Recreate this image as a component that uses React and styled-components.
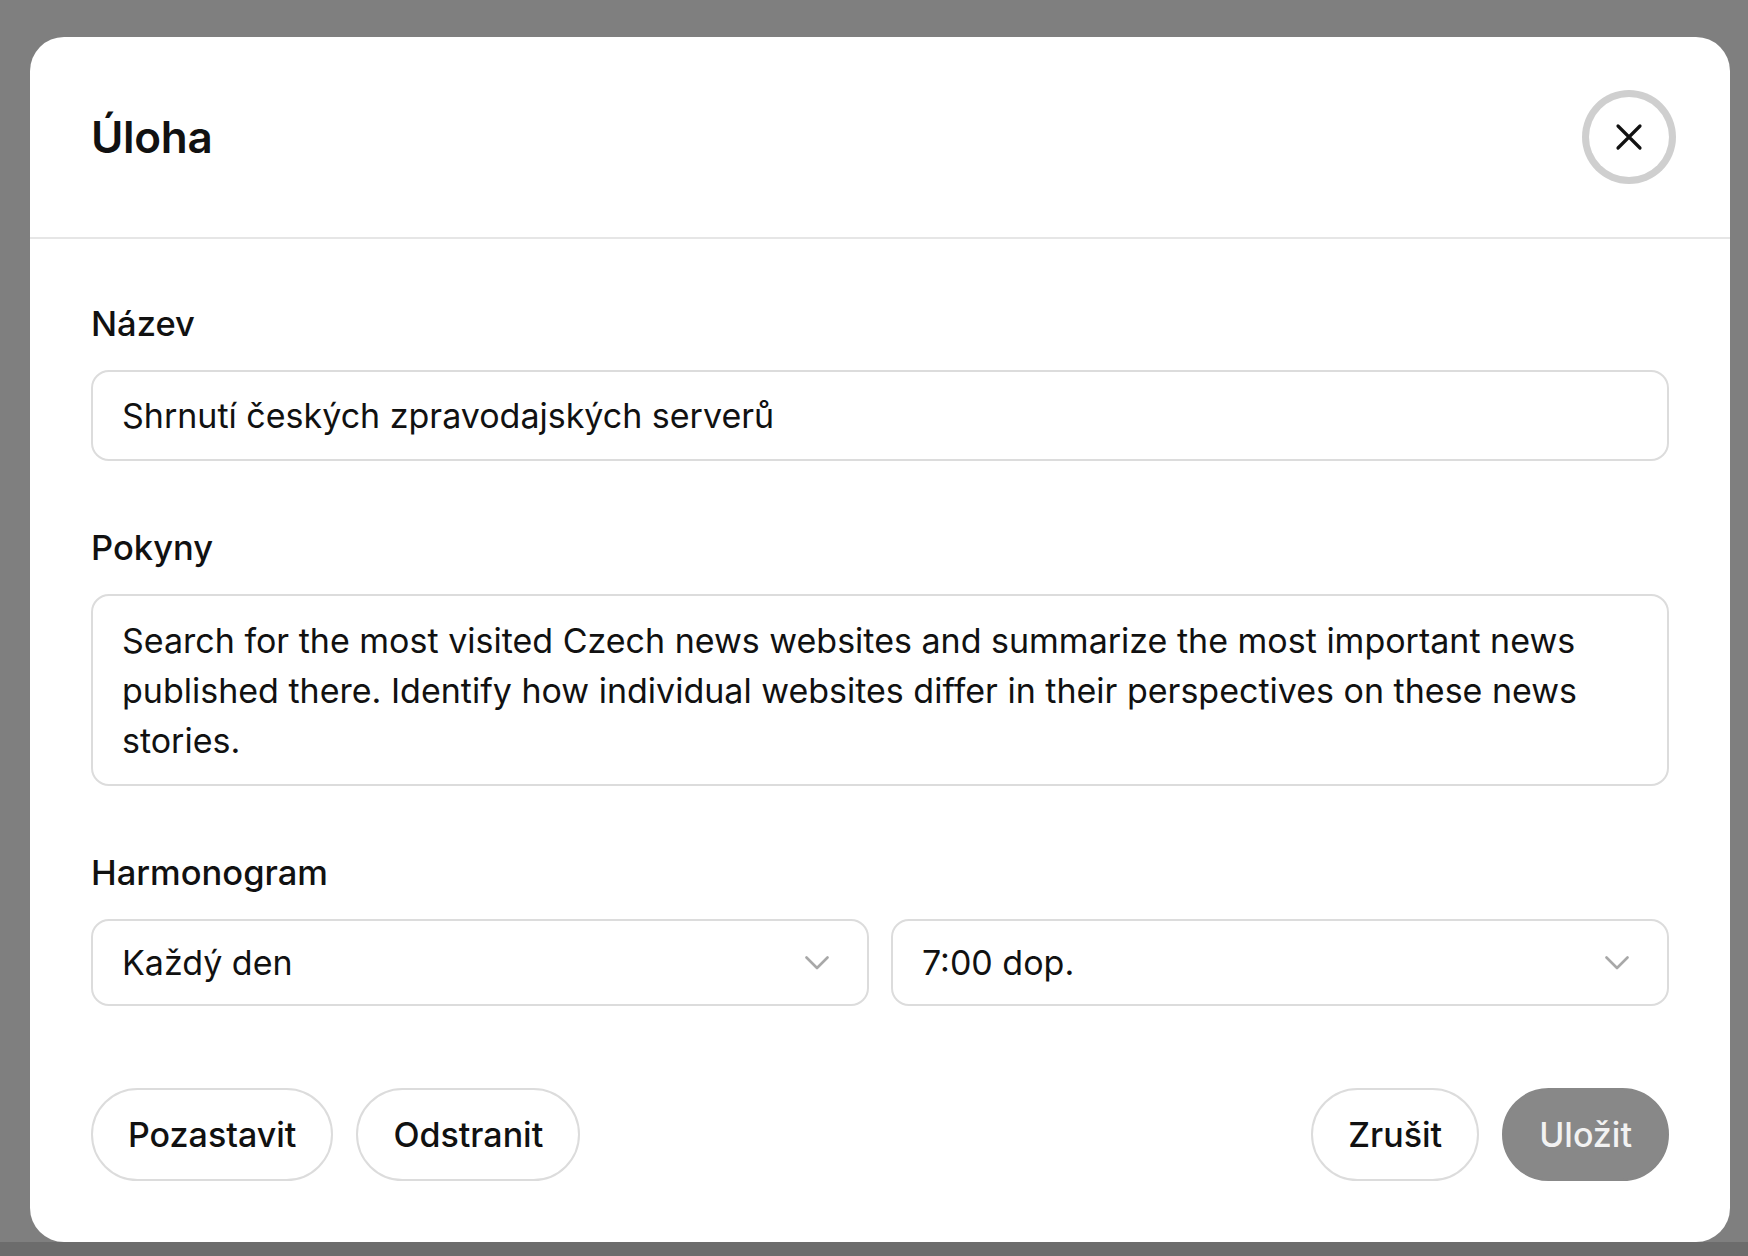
import React, { useState } from "react";
import styled, { createGlobalStyle } from "styled-components";

const GlobalStyle = createGlobalStyle`
  html, body {
    margin: 0;
    padding: 0;
    background: #7f7f7f;
    font-family: Inter, "Noto Sans", "Liberation Sans", sans-serif;
    color: #111111;
  }
  * {
    box-sizing: border-box;
  }
`;

const Backdrop = styled.div`
  min-height: 1256px;
  display: flex;
  align-items: flex-start;
  padding: 37px 18px 0 30px;
  background: linear-gradient(to bottom, #7f7f7f 0, #7f7f7f 1242px, #6c6c6c 1242px);
`;

const Modal = styled.div`
  width: 1700px;
  background: #ffffff;
  border-radius: 34px;
  overflow: hidden;
`;

const Header = styled.div`
  height: 202px;
  display: flex;
  align-items: center;
  justify-content: space-between;
  padding: 0 61px 0 61px;
  border-bottom: 2px solid #e6e6e6;
`;

const Title = styled.h2`
  margin: 0;
  font-size: 44px;
  font-weight: 600;
  letter-spacing: -0.3px;
`;

const CloseButton = styled.button`
  width: 80px;
  height: 80px;
  border-radius: 50%;
  border: none;
  background: #ffffff;
  box-shadow: 0 0 0 7px #cfcfcf;
  display: flex;
  align-items: center;
  justify-content: center;
  padding: 0;
  cursor: pointer;
`;

const Body = styled.div`
  display: flex;
  flex-direction: column;
  gap: 67px;
  padding: 65px 61px 61px 61px;
`;

const Field = styled.div`
  display: flex;
  flex-direction: column;
  gap: 26px;
`;

const Label = styled.label`
  font-size: 34.5px;
  line-height: 40px;
  font-weight: 500;
`;

const TextInput = styled.input`
  height: 91px;
  border: 2px solid #dcdcdc;
  border-radius: 18px;
  padding: 0 29px;
  font-family: inherit;
  font-size: 34px;
  color: #111111;
  outline: none;
`;

const TextArea = styled.textarea`
  height: 192px;
  border: 2px solid #dcdcdc;
  border-radius: 18px;
  padding: 20px 29px 18px 29px;
  font-family: inherit;
  font-size: 34px;
  line-height: 50px;
  color: #111111;
  resize: none;
  outline: none;
`;

const SelectRow = styled.div`
  display: grid;
  grid-template-columns: 1fr 1fr;
  gap: 22px;
`;

const Select = styled.div`
  height: 87px;
  border: 2px solid #dcdcdc;
  border-radius: 18px;
  padding: 0 38px 0 29px;
  display: flex;
  align-items: center;
  justify-content: space-between;
  font-size: 34px;
  cursor: pointer;
`;

const Footer = styled.div`
  display: flex;
  justify-content: space-between;
  margin-top: 15px;
`;

const ButtonGroup = styled.div`
  display: flex;
  gap: 23px;
`;

const PillButton = styled.button`
  height: 93px;
  padding: 0 ${(p) => (p.$primary ? "35px" : "35px")};
  border-radius: 47px;
  border: 2px solid ${(p) => (p.$primary ? "#888888" : "#dcdcdc")};
  background: ${(p) => (p.$primary ? "#888888" : "#ffffff")};
  color: ${(p) => (p.$primary ? "#f2f2f2" : "#111111")};
  font-family: inherit;
  font-size: 34px;
  font-weight: 500;
  cursor: pointer;
`;

function Chevron() {
  return (
    <svg width="24" height="14" viewBox="0 0 24 14" fill="none">
      <path
        d="M1.5 1.5 L12 12 L22.5 1.5"
        stroke="#a8a8a8"
        strokeWidth="2.6"
        strokeLinecap="round"
        strokeLinejoin="round"
      />
    </svg>
  );
}

function CloseIcon() {
  return (
    <svg width="28" height="28" viewBox="0 0 28 28" fill="none">
      <path
        d="M3 3 L25 25 M25 3 L3 25"
        stroke="#111111"
        strokeWidth="3.2"
        strokeLinecap="round"
      />
    </svg>
  );
}

export default function App() {
  const [name, setName] = useState("Shrnutí českých zpravodajských serverů");
  const [instructions, setInstructions] = useState(
    "Search for the most visited Czech news websites and summarize the most important news published there. Identify how individual websites differ in their perspectives on these news stories."
  );

  return (
    <>
      <GlobalStyle />
      <Backdrop>
        <Modal>
          <Header>
            <Title>Úloha</Title>
            <CloseButton aria-label="Zavřít">
              <CloseIcon />
            </CloseButton>
          </Header>
          <Body>
            <Field>
              <Label>Název</Label>
              <TextInput value={name} onChange={(e) => setName(e.target.value)} />
            </Field>
            <Field>
              <Label>Pokyny</Label>
              <TextArea
                value={instructions}
                onChange={(e) => setInstructions(e.target.value)}
              />
            </Field>
            <Field>
              <Label>Harmonogram</Label>
              <SelectRow>
                <Select>
                  <span>Každý den</span>
                  <Chevron />
                </Select>
                <Select>
                  <span>7:00 dop.</span>
                  <Chevron />
                </Select>
              </SelectRow>
            </Field>
            <Footer>
              <ButtonGroup>
                <PillButton>Pozastavit</PillButton>
                <PillButton>Odstranit</PillButton>
              </ButtonGroup>
              <ButtonGroup>
                <PillButton>Zrušit</PillButton>
                <PillButton $primary>Uložit</PillButton>
              </ButtonGroup>
            </Footer>
          </Body>
        </Modal>
      </Backdrop>
    </>
  );
}
